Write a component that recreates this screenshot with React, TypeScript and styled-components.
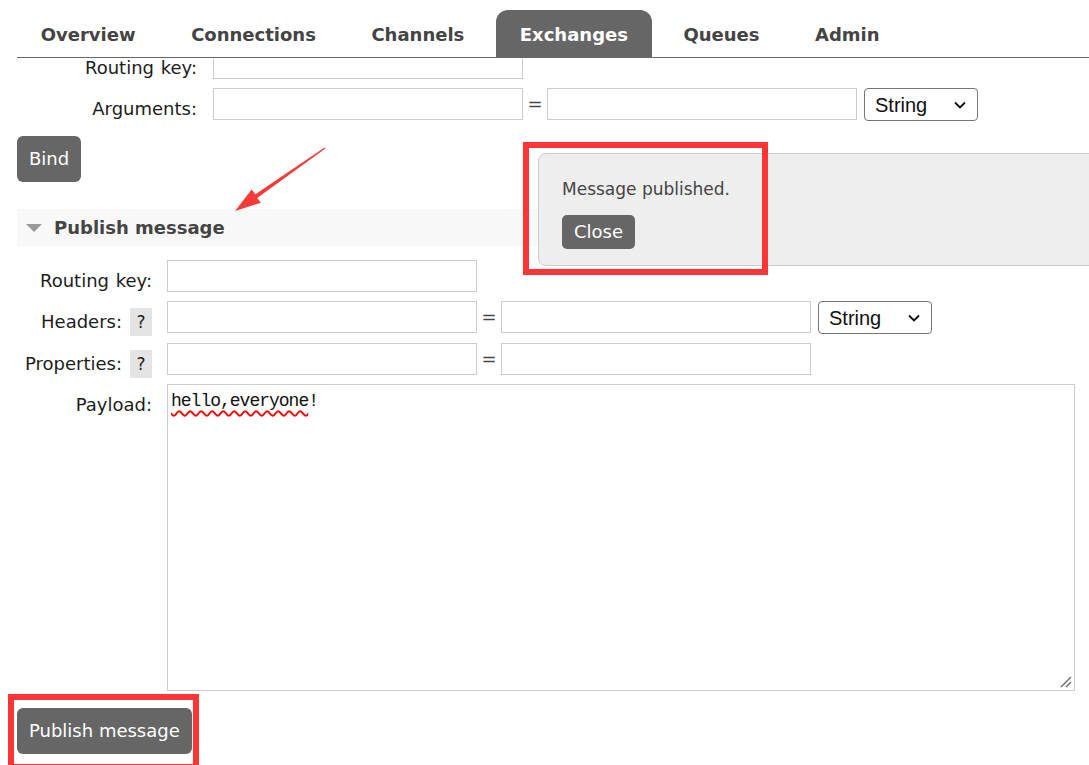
import React from 'react';
import styled, {createGlobalStyle} from 'styled-components';

const GlobalStyle = createGlobalStyle`
  html, body {
    margin: 0;
    padding: 0;
    background: #fff;
  }
  body {
    font-family: "DejaVu Sans", Verdana, sans-serif;
    overflow: hidden;
  }
  * {
    box-sizing: border-box;
  }
`;

const tabs = ['Overview', 'Connections', 'Channels', 'Exchanges', 'Queues', 'Admin'];

const Chevron: React.FC = () => (
  <ChevronIcon viewBox="0 0 12 8" width="12" height="8">
    <path d="M1 1.5 L6 6.5 L11 1.5" fill="none" stroke="#111" strokeWidth="1.8" />
  </ChevronIcon>
);

const TypeSelect: React.FC = () => (
  <SelectWrap>
    <Select defaultValue="String">
      <option>String</option>
      <option>Number</option>
      <option>Boolean</option>
      <option>List</option>
    </Select>
    <Chevron />
  </SelectWrap>
);

export default function App() {
  return (
    <>
      <GlobalStyle />
      <Page>
        <TabBar>
          {tabs.map((t) => (
            <Tab key={t} $active={t === 'Exchanges'}>
              {t}
            </Tab>
          ))}
        </TabBar>

        <Content>
          <Form>
            <Row>
              <LabelCell $width={180} $gap={16}>
                <Label>Routing key:</Label>
              </LabelCell>
              <TextInput />
            </Row>
            <Row>
              <LabelCell $width={180} $gap={16}>
                <Label>Arguments:</Label>
              </LabelCell>
              <TextInput />
              <Eq>=</Eq>
              <TextInput />
              <TypeSelect />
            </Row>
          </Form>

          <BindButton>Bind</BindButton>

          <SectionHead>
            <Triangle />
            <SectionTitle>Publish message</SectionTitle>
          </SectionHead>

          <Form $top={14}>
            <Row>
              <LabelCell $width={135} $gap={15}>
                <Label>Routing key:</Label>
              </LabelCell>
              <TextInput />
            </Row>
            <Row>
              <LabelCell $width={135} $gap={15}>
                <Label>Headers:</Label>
                <Help>?</Help>
              </LabelCell>
              <TextInput />
              <Eq>=</Eq>
              <TextInput />
              <TypeSelect />
            </Row>
            <Row>
              <LabelCell $width={135} $gap={15}>
                <Label>Properties:</Label>
                <Help>?</Help>
              </LabelCell>
              <TextInput />
              <Eq>=</Eq>
              <TextInput />
            </Row>
            <Row>
              <LabelCell $width={135} $gap={15}>
                <Label>Payload:</Label>
              </LabelCell>
              <PayloadBox>
                <Misspelled>hello,everyone</Misspelled>!
                <Grip viewBox="0 0 12 12" width="12" height="12">
                  <path d="M1 11 L11 1 M6 11 L11 6" stroke="#666" strokeWidth="1.3" />
                </Grip>
              </PayloadBox>
            </Row>
          </Form>

          <PublishButton>Publish message</PublishButton>
        </Content>

        <Notice>
          <NoticeText>Message published.</NoticeText>
          <CloseButton>Close</CloseButton>
        </Notice>

        <Frame $x={523} $y={142} $w={245} $h={133} />
        <Frame $x={8} $y={694} $w={191} $h={76} />

        <Overlay viewBox="0 0 1089 765">
          <polygon
            points="235,211 260.9,202.7 257.2,197.9 325.4,148.5 324.6,147.5 255.4,194.3 251.7,189.5"
            fill="#f53a3a"
          />
        </Overlay>
      </Page>
    </>
  );
}

const Page = styled.div`
  position: relative;
  width: 100%;
  height: 765px;
  overflow: hidden;
  padding-left: 17px;
`;

const TabBar = styled.nav`
  position: relative;
  z-index: 2;
  display: flex;
  gap: 8px;
  height: 58px;
  padding-top: 10px;
  background: #fff;
  border-bottom: 1px solid #666;
`;

const Tab = styled.div<{$active?: boolean}>`
  height: 47px;
  padding: 3px 23.75px 0;
  line-height: 44px;
  font-size: 18px;
  font-weight: bold;
  color: ${(p) => (p.$active ? '#fff' : '#444')};
  background: ${(p) => (p.$active ? '#666' : 'transparent')};
  border-radius: 12px 12px 0 0;
`;

const Content = styled.main`
  margin-top: -11px;
  display: flex;
  flex-direction: column;
  align-items: flex-start;
`;

const Form = styled.div<{$top?: number}>`
  display: flex;
  flex-direction: column;
  gap: 9px;
  margin-top: ${(p) => p.$top ?? 0}px;
`;

const Row = styled.div`
  display: flex;
  align-items: flex-start;
`;

const LabelCell = styled.div<{$width: number; $gap: number}>`
  width: ${(p) => p.$width}px;
  margin-right: ${(p) => p.$gap}px;
  height: 32px;
  display: flex;
  justify-content: flex-end;
  align-items: flex-start;
`;

const Label = styled.label`
  padding-top: 11px;
  font-size: 18px;
  line-height: 20px;
  word-spacing: 1px;
  color: #1c1c1c;
  white-space: nowrap;
`;

const Help = styled.span`
  width: 22px;
  height: 28px;
  margin: 7px 0 0 8px;
  background: #e4e4e4;
  display: flex;
  align-items: center;
  justify-content: center;
  font-size: 17px;
  color: #222;
`;

const TextInput = styled.input.attrs({type: 'text'})`
  width: 310px;
  height: 32px;
  border: 1px solid #ccc;
  background: #fff;
  outline: none;
  font-size: 16px;
  padding: 2px 4px;
`;

const Eq = styled.span`
  width: 24px;
  line-height: 32px;
  text-align: center;
  font-size: 18px;
  color: #444;
`;

const SelectWrap = styled.div`
  position: relative;
  margin-left: 7px;
`;

const Select = styled.select`
  appearance: none;
  width: 114px;
  height: 33px;
  padding: 0 0 0 10px;
  border: 1px solid #767676;
  border-radius: 4px;
  background: #fff;
  font-family: "Liberation Sans", Arial, sans-serif;
  font-size: 20px;
  color: #111;
`;

const ChevronIcon = styled.svg`
  position: absolute;
  right: 12px;
  top: 13px;
  pointer-events: none;
`;

const Button = styled.button`
  border: none;
  border-radius: 6px;
  background: #666;
  color: #fff;
  font-family: "DejaVu Sans", Verdana, sans-serif;
  font-size: 18px;
  line-height: 22px;
  padding: 12px 12px;
  white-space: nowrap;
`;

const BindButton = styled(Button)`
  margin-top: 15px;
`;

const PublishButton = styled(Button)`
  margin-top: 17px;
`;

const CloseButton = styled(Button)`
  padding: 6px 12px;
  border-radius: 5px;
`;

const SectionHead = styled.div`
  margin-top: 27px;
  width: 100%;
  height: 37px;
  background: #f8f8f8;
  display: flex;
  align-items: center;
  padding-left: 9px;
`;

const Triangle = styled.span`
  width: 0;
  height: 0;
  border-left: 8.5px solid transparent;
  border-right: 8.5px solid transparent;
  border-top: 8px solid #999;
`;

const SectionTitle = styled.h2`
  margin: 0 0 1px 12px;
  font-size: 18px;
  font-weight: bold;
  color: #444;
`;

const PayloadBox = styled.div`
  position: relative;
  width: 908px;
  height: 307px;
  border: 1px solid #ccc;
  padding: 5px 3px;
  font-family: "Liberation Mono", "Courier New", monospace;
  font-size: 18px;
  letter-spacing: -1px;
  line-height: 22px;
  color: #111;
`;

const Misspelled = styled.span`
  text-decoration: underline wavy #f00;
  text-decoration-thickness: 1.5px;
  text-underline-offset: 4px;
`;

const Grip = styled.svg`
  position: absolute;
  right: 2px;
  bottom: 2px;
`;

const Notice = styled.div`
  position: absolute;
  z-index: 3;
  left: 538px;
  top: 153px;
  right: -12px;
  height: 113px;
  background: #eee;
  border: 1px solid #ccc;
  border-radius: 8px;
  padding: 24px 23px 0;
`;

const NoticeText = styled.p`
  margin: 0 0 15px;
  font-size: 17px;
  line-height: 22px;
  color: #444;
`;

const Frame = styled.div<{$x: number; $y: number; $w: number; $h: number}>`
  position: absolute;
  z-index: 4;
  left: ${(p) => p.$x}px;
  top: ${(p) => p.$y}px;
  width: ${(p) => p.$w}px;
  height: ${(p) => p.$h}px;
  border: 6px solid #fd3535;
  pointer-events: none;
`;

const Overlay = styled.svg`
  position: absolute;
  z-index: 4;
  left: 0;
  top: 0;
  width: 1089px;
  height: 765px;
  pointer-events: none;
`;
